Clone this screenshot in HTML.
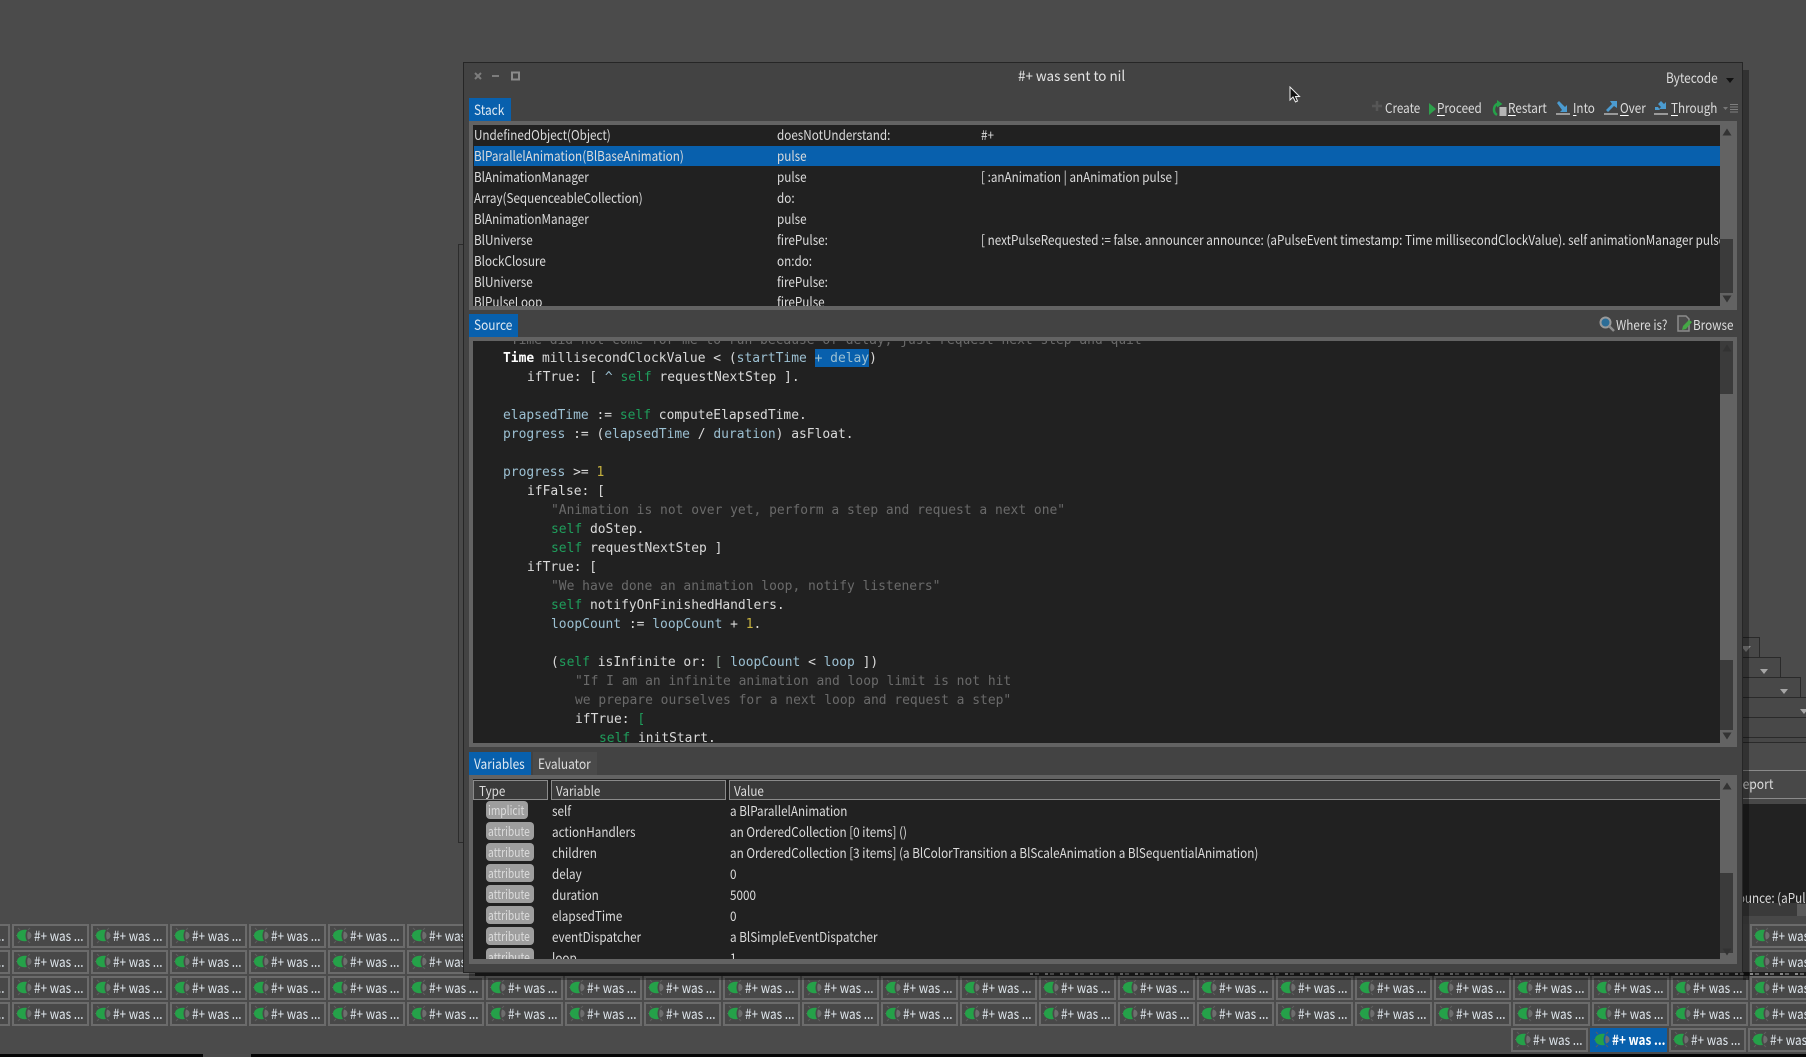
<!DOCTYPE html>
<html><head><meta charset="utf-8"><title>#+ was sent to nil</title>
<style>
html,body{margin:0;padding:0;width:1806px;height:1057px;overflow:hidden;background:#4b4b4b}
body{position:relative;font-family:"Noto Sans CJK SC","Noto Sans CJK JP","Liberation Sans",sans-serif;font-size:13.5px;color:#dcdcdc}
.a{position:absolute;display:block}
.t{position:absolute;white-space:nowrap;line-height:20px;height:20px;transform:scaleX(.866);transform-origin:0 0}
.tab{font-size:14px;transform:scaleX(.85)}
.row{position:absolute;left:-67px;display:flex;gap:2px;white-space:nowrap}
.b{position:relative;display:block;flex:none;width:73px;height:20px;padding:0;border:2px solid #6b6b6b;background:#484848;font-size:14px;line-height:20px;font-style:normal;color:#dfe6ec;overflow:hidden}
.b svg{position:absolute;left:2px;top:1px;width:18px;height:18px}
.b em{position:absolute;left:20px;top:0;font-style:normal;white-space:nowrap;transform:scaleX(.84);transform-origin:0 0}
.s{background:#0860ad;border-color:#0860ad;font-weight:700;color:#fff}
.c{position:absolute;white-space:pre;font:12.95px/19px "DejaVu Sans Mono","Liberation Mono",monospace;height:19px;color:#dadada}
.v{color:#9cc0d2}.k{color:#1f9e5c}.g{color:#6a6a6a}.n{color:#c7b23f}.br{color:#8f9f95}.tb{color:#1f9e5c}
.tag{position:absolute;height:18px;border-radius:4px;background:#9e9e9e;color:#dcdcdc;font-size:12.5px;line-height:17px;overflow:hidden;white-space:nowrap}
.tag span{position:absolute;left:2px;top:0;transform:scaleX(.82);transform-origin:0 0}
u{text-decoration:none;border-bottom:1px solid #fff;display:inline-block;line-height:15px;height:15px}
</style></head><body>
<svg width="0" height="0" style="position:absolute"><defs>
<g id="bug"><path d="M4 3 2 1M4 14 2 16M1 8.500H0M12 3 14 1M12 14 14 16" stroke="#5f5f5f" stroke-width="1" fill="none"/><path d="M11 3C5 2 1 5 1 8.500S5 15 11 14C9 11 9 6 11 3Z" fill="#25a149"/><path d="M12 4.500C14.500 5 15.500 7 15.500 8.500S14.500 12 12 12.500C11 10.500 11 6.500 12 4.500Z" fill="#6e6e6e"/></g>
</defs></svg>

<!-- background windows -->
<div class="a" style="left:458px;top:244px;width:20px;height:597px;border:1px solid #2c2c2c;background:#494949"></div>
<div class="a" style="left:1700px;top:637px;width:58px;height:200px;border:1px solid #2a2a2a;background:#484848"></div>
<div class="a" style="left:1700px;top:657px;width:79px;height:180px;border:1px solid #2a2a2a;background:#484848"></div>
<div class="a" style="left:1700px;top:677px;width:99px;height:160px;border:1px solid #2a2a2a;background:#484848"></div>
<div class="a" style="left:1700px;top:697px;width:120px;height:40px;border:1px solid #2a2a2a;background:#484848"></div>
<div class="a" style="left:1700px;top:717px;width:120px;height:20px;border-top:1px solid #2a2a2a;background:#484848"></div>
<div class="a" style="left:1700px;top:737px;width:120px;height:5px;border-top:1px solid #2a2a2a;background:#484848"></div>
<div class="a" style="left:1700px;top:742px;width:120px;height:28px;border-top:1px solid #2a2a2a;background:#4b4b4b"></div>
<div class="a" style="left:1700px;top:770px;width:120px;height:27px;border-top:1px solid #8a8a8a;border-bottom:1px solid #8a8a8a;background:#484848"></div>
<div class="a" style="left:1700px;top:799px;width:120px;height:125px;background:#484848"></div>
<div class="a" style="left:1700px;top:804px;width:120px;height:99px;background:#222"></div>
<div class="a" style="left:1700px;top:903px;width:120px;height:13px;background:#3a3a3a"></div>
<div class="a" style="left:1797px;top:904px;width:9px;height:12px;background:#5a5a5a"></div>
<div class="t" style="left:1735px;top:774px;font-size:14px">Report</div>
<div class="t" style="left:1717px;top:887px">announce: (aPulseEvent</div>
<div class="a" style="top:646px;width:0;height:0;border:5px solid transparent;border-top:6px solid #8a8a8a;left:1741px"></div>
<div class="a" style="left:1760px;top:669px;width:0;height:0;border:4px solid transparent;border-top:5px solid #a6a6a6"></div>
<div class="a" style="left:1780px;top:689px;width:0;height:0;border:4px solid transparent;border-top:5px solid #a6a6a6"></div>
<div class="a" style="left:1800px;top:709px;width:0;height:0;border:4px solid transparent;border-top:5px solid #a6a6a6"></div>

<!-- button rows -->
<div class="row" style="top:924px"><i class="b"><svg><use href="#bug"/></svg><em>#+ was ...</em></i><i class="b"><svg><use href="#bug"/></svg><em>#+ was ...</em></i><i class="b"><svg><use href="#bug"/></svg><em>#+ was ...</em></i><i class="b"><svg><use href="#bug"/></svg><em>#+ was ...</em></i><i class="b"><svg><use href="#bug"/></svg><em>#+ was ...</em></i><i class="b"><svg><use href="#bug"/></svg><em>#+ was ...</em></i><i class="b"><svg><use href="#bug"/></svg><em>#+ was ...</em></i></div>
<div class="row" style="top:950px"><i class="b"><svg><use href="#bug"/></svg><em>#+ was ...</em></i><i class="b"><svg><use href="#bug"/></svg><em>#+ was ...</em></i><i class="b"><svg><use href="#bug"/></svg><em>#+ was ...</em></i><i class="b"><svg><use href="#bug"/></svg><em>#+ was ...</em></i><i class="b"><svg><use href="#bug"/></svg><em>#+ was ...</em></i><i class="b"><svg><use href="#bug"/></svg><em>#+ was ...</em></i><i class="b"><svg><use href="#bug"/></svg><em>#+ was ...</em></i></div>
<div class="row" style="top:924px;left:1750px"><i class="b"><svg><use href="#bug"/></svg><em>#+ was ...</em></i></div>
<div class="row" style="top:950px;left:1750px"><i class="b"><svg><use href="#bug"/></svg><em>#+ was ...</em></i></div>
<div class="row" style="top:976px"><i class="b"><svg><use href="#bug"/></svg><em>#+ was ...</em></i><i class="b"><svg><use href="#bug"/></svg><em>#+ was ...</em></i><i class="b"><svg><use href="#bug"/></svg><em>#+ was ...</em></i><i class="b"><svg><use href="#bug"/></svg><em>#+ was ...</em></i><i class="b"><svg><use href="#bug"/></svg><em>#+ was ...</em></i><i class="b"><svg><use href="#bug"/></svg><em>#+ was ...</em></i><i class="b"><svg><use href="#bug"/></svg><em>#+ was ...</em></i><i class="b"><svg><use href="#bug"/></svg><em>#+ was ...</em></i><i class="b"><svg><use href="#bug"/></svg><em>#+ was ...</em></i><i class="b"><svg><use href="#bug"/></svg><em>#+ was ...</em></i><i class="b"><svg><use href="#bug"/></svg><em>#+ was ...</em></i><i class="b"><svg><use href="#bug"/></svg><em>#+ was ...</em></i><i class="b"><svg><use href="#bug"/></svg><em>#+ was ...</em></i><i class="b"><svg><use href="#bug"/></svg><em>#+ was ...</em></i><i class="b"><svg><use href="#bug"/></svg><em>#+ was ...</em></i><i class="b"><svg><use href="#bug"/></svg><em>#+ was ...</em></i><i class="b"><svg><use href="#bug"/></svg><em>#+ was ...</em></i><i class="b"><svg><use href="#bug"/></svg><em>#+ was ...</em></i><i class="b"><svg><use href="#bug"/></svg><em>#+ was ...</em></i><i class="b"><svg><use href="#bug"/></svg><em>#+ was ...</em></i><i class="b"><svg><use href="#bug"/></svg><em>#+ was ...</em></i><i class="b"><svg><use href="#bug"/></svg><em>#+ was ...</em></i><i class="b"><svg><use href="#bug"/></svg><em>#+ was ...</em></i><i class="b"><svg><use href="#bug"/></svg><em>#+ was ...</em></i></div>
<div class="row" style="top:1002px"><i class="b"><svg><use href="#bug"/></svg><em>#+ was ...</em></i><i class="b"><svg><use href="#bug"/></svg><em>#+ was ...</em></i><i class="b"><svg><use href="#bug"/></svg><em>#+ was ...</em></i><i class="b"><svg><use href="#bug"/></svg><em>#+ was ...</em></i><i class="b"><svg><use href="#bug"/></svg><em>#+ was ...</em></i><i class="b"><svg><use href="#bug"/></svg><em>#+ was ...</em></i><i class="b"><svg><use href="#bug"/></svg><em>#+ was ...</em></i><i class="b"><svg><use href="#bug"/></svg><em>#+ was ...</em></i><i class="b"><svg><use href="#bug"/></svg><em>#+ was ...</em></i><i class="b"><svg><use href="#bug"/></svg><em>#+ was ...</em></i><i class="b"><svg><use href="#bug"/></svg><em>#+ was ...</em></i><i class="b"><svg><use href="#bug"/></svg><em>#+ was ...</em></i><i class="b"><svg><use href="#bug"/></svg><em>#+ was ...</em></i><i class="b"><svg><use href="#bug"/></svg><em>#+ was ...</em></i><i class="b"><svg><use href="#bug"/></svg><em>#+ was ...</em></i><i class="b"><svg><use href="#bug"/></svg><em>#+ was ...</em></i><i class="b"><svg><use href="#bug"/></svg><em>#+ was ...</em></i><i class="b"><svg><use href="#bug"/></svg><em>#+ was ...</em></i><i class="b"><svg><use href="#bug"/></svg><em>#+ was ...</em></i><i class="b"><svg><use href="#bug"/></svg><em>#+ was ...</em></i><i class="b"><svg><use href="#bug"/></svg><em>#+ was ...</em></i><i class="b"><svg><use href="#bug"/></svg><em>#+ was ...</em></i><i class="b"><svg><use href="#bug"/></svg><em>#+ was ...</em></i><i class="b"><svg><use href="#bug"/></svg><em>#+ was ...</em></i></div>
<div class="row" style="top:1028px;left:1511px"><i class="b"><svg><use href="#bug"/></svg><em>#+ was ...</em></i><i class="b s"><svg><use href="#bug"/></svg><em>#+ was ...</em></i><i class="b"><svg><use href="#bug"/></svg><em>#+ was ...</em></i><i class="b"><svg><use href="#bug"/></svg><em>#+ was ...</em></i></div>
<div class="a" style="left:0;top:1054px;width:1806px;height:3px;background:#050505"></div>
<div class="a" style="left:203px;top:1054px;width:48px;height:3px;background:#4b4b4b"></div>

<!-- shadow and strip behind window -->
<div class="a" style="left:475px;top:972px;width:1331px;height:4px;background:#1e1e1e"></div>
<div class="a" style="left:1030px;top:973px;width:776px;height:2px;background:repeating-linear-gradient(90deg,#8a8a8a 0 3px,#1e1e1e 3px 5px,#666 5px 9px,#1e1e1e 9px 15px)"></div>
<div class="a" style="left:1743px;top:70px;width:6px;height:910px;background:rgba(0,0,0,.32)"></div>
<div class="a" style="left:469px;top:972px;width:1280px;height:8px;background:rgba(0,0,0,.32)"></div>

<!-- main window -->
<div class="a" style="left:463px;top:62px;width:1278px;height:909px;border:1px solid #262626;background:#434343"></div>
<svg class="a" style="left:470px;top:68px" width="56" height="16"><path d="M5 5 11 11M11 5 5 11" stroke="#7d7d7d" stroke-width="2" fill="none"/><path d="M22 8H29" stroke="#7d7d7d" stroke-width="2"/><rect x="42" y="4.500" width="7" height="7" fill="none" stroke="#8a8a8a" stroke-width="2"/></svg>
<div class="t" style="left:1018px;top:66px;font-size:14px;color:#e4e4e4;transform:scaleX(.96)">#+ was sent to nil</div>
<div class="t" style="left:1666px;top:68px;font-size:14px;transform:scaleX(.85)">Bytecode</div>
<div class="a" style="left:1726px;top:78px;width:0;height:0;border:4px solid transparent;border-top:5px solid #111"></div>
<svg class="a" style="left:1289px;top:86px" width="12" height="18"><path d="M1 1V14L4 11 6.500 16 8.500 15 6.500 10.500H10.500Z" fill="#111" stroke="#eee" stroke-width="1"/></svg>

<!-- toolbar -->
<svg class="a" style="left:1370px;top:99px" width="14" height="14"><path d="M7 2V12M2 7H12" stroke="#565656" stroke-width="2.500"/></svg>
<div class="t" style="left:1385px;top:97px">Create</div>
<svg class="a" style="left:1428px;top:102px" width="10" height="14"><path d="M1 1 8 7 1 13Z" fill="#2ea14c"/></svg>
<div class="t" style="left:1437px;top:97px"><u>P</u>roceed</div>
<svg class="a" style="left:1491px;top:99px" width="17" height="18"><path d="M7 4.500A6.500 6.500 0 0 0 6 16" stroke="#25a149" stroke-width="2.500" fill="none"/><path d="M6 1 11.500 5 6 8.500Z" fill="#25a149"/><rect x="8.500" y="8" width="7" height="9" fill="#b5b5b5"/></svg>
<div class="t" style="left:1508px;top:97px"><u>R</u>estart</div>
<svg class="a" style="left:1556px;top:100px" width="15" height="16"><path d="M1 3 3 1 9 7 11 5V12H4L6 10Z" fill="#4b9bd0"/><rect x="0" y="13" width="14" height="2" fill="#9a9a9a"/></svg>
<div class="t" style="left:1573px;top:97px"><u>I</u>nto</div>
<svg class="a" style="left:1604px;top:100px" width="15" height="16"><path d="M2 10 4 12 10 6 13 8V1H6L8 4Z" fill="#4b9bd0"/><rect x="0" y="13" width="14" height="2" fill="#9a9a9a"/></svg>
<div class="t" style="left:1620px;top:97px"><u>O</u>ver</div>
<svg class="a" style="left:1654px;top:100px" width="15" height="16"><path d="M4 4 7 1 10 4 12 2V9H5L7 7Z" fill="#4b9bd0"/><path d="M1 7H4L6 10H1Z" fill="#4b9bd0"/><rect x="0" y="13" width="14" height="2" fill="#9a9a9a"/></svg>
<div class="t" style="left:1671px;top:97px"><u>T</u>hrough</div>
<svg class="a" style="left:1723px;top:103px" width="16" height="10"><path d="M0 4H5L2.500 7Z" fill="#777"/><path d="M7 1.500H15M7 4H15M7 6.500H15M7 9H15" stroke="#7f7f7f" stroke-width="1"/></svg>

<!-- Stack -->
<div class="a" style="left:469px;top:98px;width:42px;height:23px;background:#0860ad"></div>
<div class="t tab" style="left:474px;top:100px;color:#dfe9f2">Stack</div>
<div class="a" style="left:469px;top:121px;width:1268px;height:189px;background:#636363"></div>
<div class="a" style="left:473px;top:125px;width:1247px;height:181px;background:#212121;overflow:hidden">
<div class="a" style="left:1px;top:21px;width:1246px;height:20px;background:#0860ad"></div>
<div class="t" style="left:1px;top:-1px">UndefinedObject(Object)</div><div class="t" style="left:304px;top:-1px">doesNotUnderstand:</div><div class="t" style="left:508px;top:-1px">#+</div>
<div class="t" style="left:1px;top:20px">BlParallelAnimation(BlBaseAnimation)</div><div class="t" style="left:304px;top:20px">pulse</div>
<div class="t" style="left:1px;top:41px">BlAnimationManager</div><div class="t" style="left:304px;top:41px">pulse</div><div class="t" style="left:508px;top:41px">[ :anAnimation | anAnimation pulse ]</div>
<div class="t" style="left:1px;top:62px">Array(SequenceableCollection)</div><div class="t" style="left:304px;top:62px">do:</div>
<div class="t" style="left:1px;top:83px">BlAnimationManager</div><div class="t" style="left:304px;top:83px">pulse</div>
<div class="t" style="left:1px;top:104px">BlUniverse</div><div class="t" style="left:304px;top:104px">firePulse:</div><div class="t" style="left:508px;top:104px">[ nextPulseRequested := false. announcer  announce: (aPulseEvent timestamp: Time millisecondClockValue). self animationManager pulse. ]</div>
<div class="t" style="left:1px;top:125px">BlockClosure</div><div class="t" style="left:304px;top:125px">on:do:</div>
<div class="t" style="left:1px;top:146px">BlUniverse</div><div class="t" style="left:304px;top:146px">firePulse:</div>
<div class="t" style="left:1px;top:166px">BlPulseLoop</div><div class="t" style="left:304px;top:166px">firePulse</div>
</div>
<div class="a" style="left:1720px;top:125px;width:13px;height:181px;background:#636363"></div>
<div class="a" style="left:1720px;top:239px;width:13px;height:54px;background:#3b3b3b"></div>
<svg class="a" style="left:1721px;top:127px" width="12" height="10"><path d="M1.500 8.500H10.500L6 1.500Z" fill="#333"/></svg>
<svg class="a" style="left:1721px;top:294px" width="12" height="10"><path d="M1.500 1.500H10.500L6 8.500Z" fill="#333"/></svg>

<!-- Source -->
<svg class="a" style="left:1598px;top:315px" width="18" height="18"><circle cx="7.500" cy="7.500" r="5" fill="#2c6d97" stroke="#9a9a9a" stroke-width="2"/><path d="M11 11 16 16" stroke="#8c8c8c" stroke-width="2.500"/></svg>
<div class="t" style="left:1616px;top:314px">Where is?</div>
<svg class="a" style="left:1677px;top:315px" width="16" height="17"><path d="M1 1H9L12 4V16H1Z" fill="#4c4c4c" stroke="#8c8c8c" stroke-width="1.500"/><path d="M5 15 6 11 12 5 15 7 9 14Z" fill="#44a845"/></svg>
<div class="t" style="left:1693px;top:314px">Browse</div>
<div class="a" style="left:469px;top:314px;width:49px;height:23px;background:#0860ad"></div>
<div class="t tab" style="left:474px;top:315px;color:#dfe9f2">Source</div>
<div class="a" style="left:469px;top:337px;width:1268px;height:410px;background:#636363"></div>
<div class="a" style="left:473px;top:341px;width:1247px;height:402px;background:#212121;overflow:hidden">
<div class="a" style="left:342px;top:8px;width:54px;height:18px;background:#0860ad"></div>
<div class="c g" style="left:30px;top:-10px">"Time did not come for me to run because of delay, just request next step and quit"</div>
<div class="c" style="left:30px;top:8px"><b style="color:#fff">Time</b> millisecondClockValue &lt; (<span class="v">startTime</span> <span class="v">+ delay</span>)</div>
<div class="c" style="left:54px;top:27px">ifTrue: [ <span class="v">^</span> <span class="k">self</span> requestNextStep ].</div>
<div class="c" style="left:30px;top:65px"><span class="v">elapsedTime</span> := <span class="k">self</span> computeElapsedTime.</div>
<div class="c" style="left:30px;top:84px"><span class="v">progress</span> := (<span class="v">elapsedTime</span> / <span class="v">duration</span>) asFloat.</div>
<div class="c" style="left:30px;top:122px"><span class="v">progress</span> &gt;= <span class="n">1</span></div>
<div class="c" style="left:54px;top:141px">ifFalse: [</div>
<div class="c g" style="left:78px;top:160px">"Animation is not over yet, perform a step and request a next one"</div>
<div class="c" style="left:78px;top:179px"><span class="k">self</span> doStep.</div>
<div class="c" style="left:78px;top:198px"><span class="k">self</span> requestNextStep ]</div>
<div class="c" style="left:54px;top:217px">ifTrue: [</div>
<div class="c g" style="left:78px;top:236px">"We have done an animation loop, notify listeners"</div>
<div class="c" style="left:78px;top:255px"><span class="k">self</span> notifyOnFinishedHandlers.</div>
<div class="c" style="left:78px;top:274px"><span class="v">loopCount</span> := <span class="v">loopCount</span> + <span class="n">1</span>.</div>
<div class="c" style="left:78px;top:312px">(<span class="k">self</span> isInfinite or: <span class="br">[</span> <span class="v">loopCount</span> &lt; <span class="v">loop</span> ])</div>
<div class="c g" style="left:102px;top:331px">"If I am an infinite animation and loop limit is not hit</div>
<div class="c g" style="left:102px;top:350px">we prepare ourselves for a next loop and request a step"</div>
<div class="c" style="left:102px;top:369px">ifTrue: <span class="tb">[</span></div>
<div class="c" style="left:126px;top:388px"><span class="k">self</span> initStart.</div>
</div>
<div class="a" style="left:1720px;top:341px;width:13px;height:402px;background:#636363"></div>
<div class="a" style="left:1720px;top:341px;width:13px;height:53px;background:#3b3b3b"></div>
<div class="a" style="left:1720px;top:660px;width:13px;height:70px;background:#3b3b3b"></div>
<svg class="a" style="left:1721px;top:343px" width="12" height="10"><path d="M1.500 8.500H10.500L6 1.500Z" fill="#333"/></svg>
<svg class="a" style="left:1721px;top:731px" width="12" height="10"><path d="M1.500 1.500H10.500L6 8.500Z" fill="#333"/></svg>

<!-- Variables -->
<div class="a" style="left:469px;top:752px;width:62px;height:23px;background:#0860ad"></div>
<div class="t tab" style="left:474px;top:754px;color:#dfe9f2">Variables</div>
<div class="a" style="left:533px;top:752px;width:64px;height:23px;background:#4a4a4a"></div>
<div class="t tab" style="left:538px;top:754px">Evaluator</div>
<div class="a" style="left:469px;top:775px;width:1268px;height:189px;background:#636363"></div>
<div class="a" style="left:473px;top:779px;width:1247px;height:180px;background:#212121;overflow:hidden">
<div class="a" style="left:0;top:1px;width:73px;height:18px;border:1px solid #8a8a8a;background:#3a3a3a"></div>
<div class="a" style="left:78px;top:1px;width:173px;height:18px;border:1px solid #8a8a8a;background:#3a3a3a"></div>
<div class="a" style="left:256px;top:1px;width:993px;height:18px;border:1px solid #8a8a8a;background:#3a3a3a"></div>
<div class="t" style="left:6px;top:1px">Type</div><div class="t" style="left:83px;top:1px">Variable</div><div class="t" style="left:261px;top:1px">Value</div>
<div class="tag" style="left:13px;top:22px;width:42px"><span>implicit</span></div><div class="t" style="left:79px;top:21px">self</div><div class="t" style="left:257px;top:21px">a BlParallelAnimation</div>
<div class="tag" style="left:13px;top:43px;width:48px"><span>attribute</span></div><div class="t" style="left:79px;top:42px">actionHandlers</div><div class="t" style="left:257px;top:42px">an OrderedCollection [0 items] ()</div>
<div class="tag" style="left:13px;top:64px;width:48px"><span>attribute</span></div><div class="t" style="left:79px;top:63px">children</div><div class="t" style="left:257px;top:63px">an OrderedCollection [3 items] (a BlColorTransition a BlScaleAnimation a BlSequentialAnimation)</div>
<div class="tag" style="left:13px;top:85px;width:48px"><span>attribute</span></div><div class="t" style="left:79px;top:84px">delay</div><div class="t" style="left:257px;top:84px">0</div>
<div class="tag" style="left:13px;top:106px;width:48px"><span>attribute</span></div><div class="t" style="left:79px;top:105px">duration</div><div class="t" style="left:257px;top:105px">5000</div>
<div class="tag" style="left:13px;top:127px;width:48px"><span>attribute</span></div><div class="t" style="left:79px;top:126px">elapsedTime</div><div class="t" style="left:257px;top:126px">0</div>
<div class="tag" style="left:13px;top:148px;width:48px"><span>attribute</span></div><div class="t" style="left:79px;top:147px">eventDispatcher</div><div class="t" style="left:257px;top:147px">a BlSimpleEventDispatcher</div>
<div class="tag" style="left:13px;top:169px;width:48px"><span>attribute</span></div><div class="t" style="left:79px;top:168px">loop</div><div class="t" style="left:257px;top:168px">1</div>
</div>
<div class="a" style="left:1720px;top:779px;width:13px;height:180px;background:#636363"></div>
<div class="a" style="left:1720px;top:873px;width:13px;height:80px;background:#3b3b3b"></div>
<svg class="a" style="left:1721px;top:781px" width="12" height="10"><path d="M1.500 8.500H10.500L6 1.500Z" fill="#333"/></svg>
<svg class="a" style="left:1721px;top:947px" width="12" height="10"><path d="M1.500 1.500H10.500L6 8.500Z" fill="#333"/></svg>
</body></html>
